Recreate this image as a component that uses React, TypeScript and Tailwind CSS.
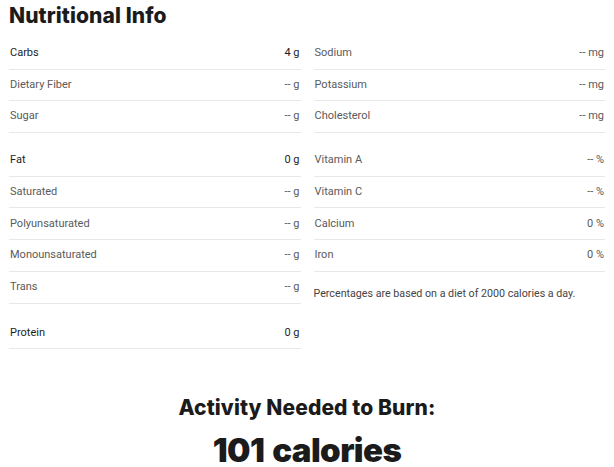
import React from "react";

type Row = { label: string; value: string; main?: boolean };

const RowItem = ({ r }: { r: Row }) => (
  <div
    className={`flex items-center justify-between border-b border-[#e8e8e8] h-[31.7px] ${
      r.main ? "text-[#1e1e1e]" : "text-[#5a5a5a]"
    }`}
  >
    <span className="pl-[1px]">{r.label}</span>
    <span className="pr-[1px]">{r.value}</span>
  </div>
);

export default function App() {
  const carbs: Row[] = [
    { label: "Carbs", value: "4 g", main: true },
    { label: "Dietary Fiber", value: "-- g" },
    { label: "Sugar", value: "-- g" },
  ];
  const fat: Row[] = [
    { label: "Fat", value: "0 g", main: true },
    { label: "Saturated", value: "-- g" },
    { label: "Polyunsaturated", value: "-- g" },
    { label: "Monounsaturated", value: "-- g" },
    { label: "Trans", value: "-- g" },
  ];
  const right1: Row[] = [
    { label: "Sodium", value: "-- mg" },
    { label: "Potassium", value: "-- mg" },
    { label: "Cholesterol", value: "-- mg" },
  ];
  const right2: Row[] = [
    { label: "Vitamin A", value: "-- %" },
    { label: "Vitamin C", value: "-- %" },
    { label: "Calcium", value: "0 %" },
    { label: "Iron", value: "0 %" },
  ];
  return (
    <div
      className="w-[614px] h-[467px] bg-white overflow-hidden px-[9px]"
      style={{ fontFamily: "Roboto, 'Liberation Sans', sans-serif" }}
    >
      <h1
        className="text-[21px] leading-[30px] font-extrabold text-[#1b1b1b] pt-[1px] tracking-[0.1px]"
        style={{ fontFamily: "Inter, 'Liberation Sans', sans-serif" }}
      >
        Nutritional Info
      </h1>
      <div className="grid grid-cols-2 gap-x-[13px] mt-[7px] text-[11px]">
        <div className="flex flex-col">
          {carbs.map((r) => (
            <RowItem key={r.label} r={r} />
          ))}
          <div className="h-[12px]" />
          {fat.map((r) => (
            <RowItem key={r.label} r={r} />
          ))}
          <div className="h-[14px]" />
          <RowItem r={{ label: "Protein", value: "0 g", main: true }} />
        </div>
        <div className="flex flex-col">
          {right1.map((r) => (
            <RowItem key={r.label} r={r} />
          ))}
          <div className="h-[12px]" />
          {right2.map((r) => (
            <RowItem key={r.label} r={r} />
          ))}
          <p className="text-[#444] mt-[15px] leading-[14px] text-[10.7px]">
            Percentages are based on a diet of 2000 calories a day.
          </p>
        </div>
      </div>
      <div
        className="flex flex-col items-center text-[#1b1b1b] mt-[47px]"
        style={{ fontFamily: "Inter, 'Liberation Sans', sans-serif" }}
      >
        <h2 className="text-[21px] leading-[24px] font-extrabold tracking-[0.1px]">
          Activity Needed to Burn:
        </h2>
        <div className="text-[33px] leading-[34px] font-black mt-[13px] tracking-[-0.6px] [word-spacing:2px]">
          101 calories
        </div>
      </div>
    </div>
  );
}
